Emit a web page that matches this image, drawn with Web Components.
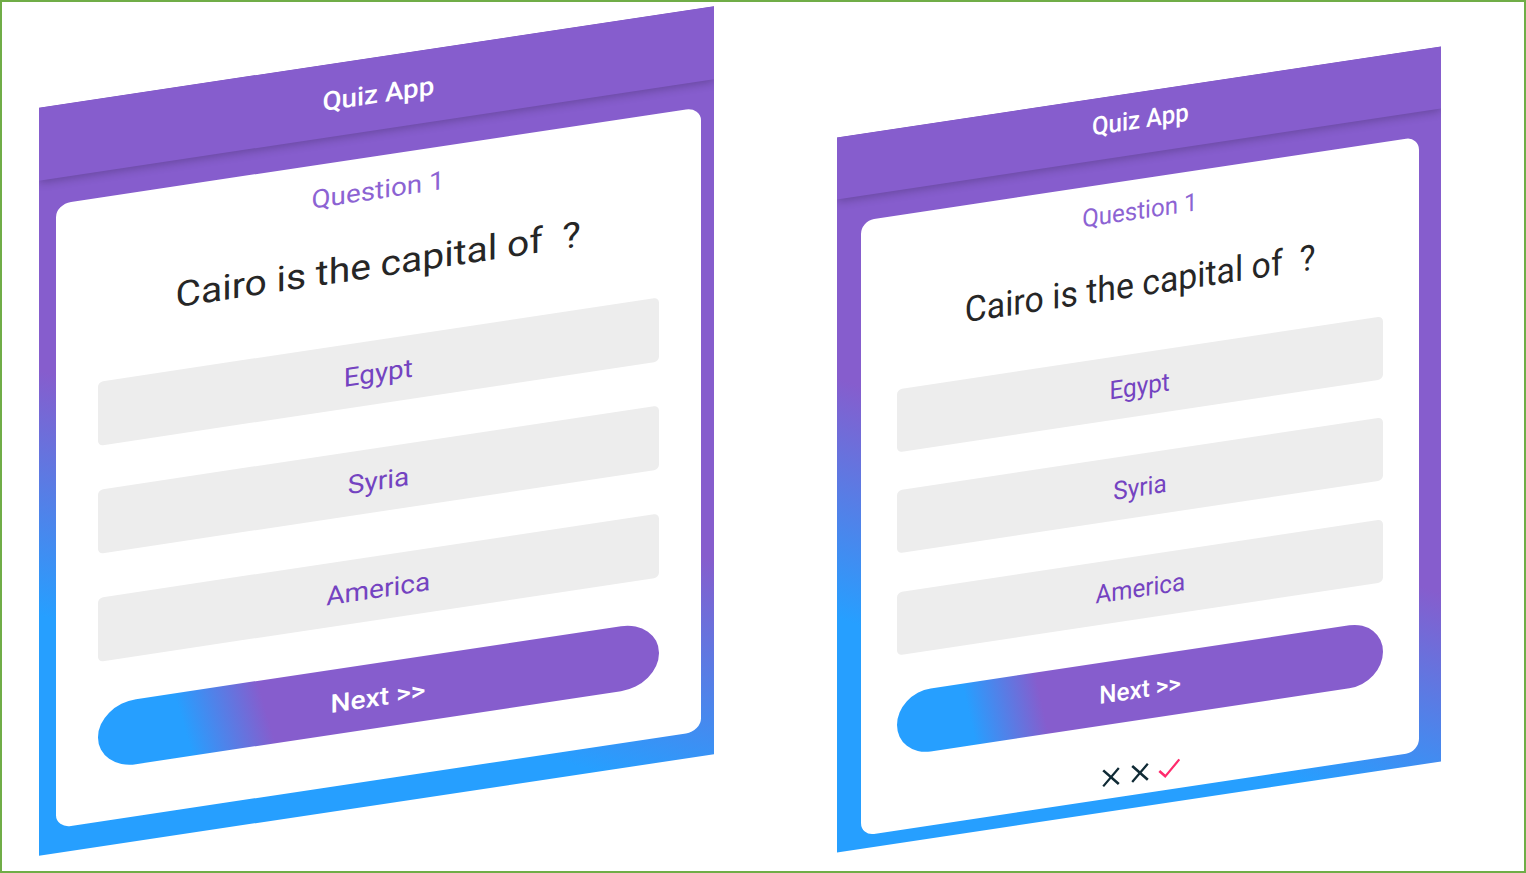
<!DOCTYPE html>
<html lang="en">
<head>
<meta charset="utf-8">
<title>Quiz App</title>
<style>
html,body{margin:0;height:100%;background:#fff}
body{font-family:Roboto,"Liberation Sans",sans-serif}
quiz-phone.a{--w:675px;--h:747.5px;--k:-.1504;--left:37px;--top:55.25px;
 --bg:linear-gradient(23.3deg,#269fff 221px,#865dcd 446px);
 --head:73px;--headpad:2px;--headx:4px;--card-m:25.5px 12.9px 24.7px 16.5px;--card-p:15px 42px 0 42px;--cr:15px/13px;
 --g1:24.5px;--g2:45px;--bh:64px;--pitch:44px;--g3:43.3px;--nh:64.5px;--nr:38px/32.25px;--br:5px;
 --btn:linear-gradient(74.4deg,#269fff 91px,#865dcd 171px)}
quiz-phone.b{--w:604px;--h:714.8px;--k:-.1507;--left:123px;--top:89.5px;
 --bg:linear-gradient(26.9deg,#269fff 209.6px,#865dcd 423.6px);
 --head:62.3px;--headpad:-7.4px;--headx:2px;--card-m:24.6px 21.9px 12.8px 24px;--card-p:12.3px 36.3px 0 36.3px;--cr:13px/13px;
 --g1:23.4px;--g2:38.6px;--bh:63px;--pitch:38.2px;--g3:38px;--nh:63.6px;--nr:34px/31.8px;--br:5px;
 --btn:linear-gradient(78deg,#269fff 77px,#865dcd 148.5px)}
</style>
</head>
<body>
<quiz-stage>
  <quiz-phone class="a">
    <fit-text slot="title" size="26" weight="500" width="112">Quiz App</fit-text>
    <fit-text slot="number" size="25.5" width="133">Question 1</fit-text>
    <fit-text slot="question" size="35.5" width="405">Cairo is the capital of  ?</fit-text>
    <quiz-option><fit-text size="26" width="69.5">Egypt</fit-text></quiz-option>
    <quiz-option><fit-text size="26" width="61.5">Syria</fit-text></quiz-option>
    <quiz-option><fit-text size="26" width="103.5">America</fit-text></quiz-option>
    <quiz-next slot="next"><fit-text size="25.5" weight="500" width="95">Next &gt;&gt;</fit-text></quiz-next>
  </quiz-phone>
  <quiz-phone class="b">
    <fit-text slot="title" size="25.5" weight="500" width="97">Quiz App</fit-text>
    <fit-text slot="number" size="25" width="115.5">Question 1</fit-text>
    <fit-text slot="question" size="35.5" width="350.5">Cairo is the capital of  ?</fit-text>
    <quiz-option><fit-text size="25.5" width="60">Egypt</fit-text></quiz-option>
    <quiz-option><fit-text size="25.5" width="53.5">Syria</fit-text></quiz-option>
    <quiz-option><fit-text size="25.5" width="90">America</fit-text></quiz-option>
    <quiz-next slot="next"><fit-text size="25" weight="500" width="81.5">Next &gt;&gt;</fit-text></quiz-next>
    <quiz-score slot="score"></quiz-score>
  </quiz-phone>
</quiz-stage>
<script>
const define = (name, html, init) => customElements.define(name, class extends HTMLElement {
  constructor() {
    super();
    this.attachShadow({ mode: 'open' }).innerHTML = html;
  }
  connectedCallback() { if (init) init(this); }
});

define('quiz-stage', `<style>
:host{display:flex;align-items:flex-start;box-sizing:border-box;width:1526px;height:873px;border:2px solid #70ad47;background:#fff;overflow:hidden}
</style><slot></slot>`);

// A phone page sheared so that its horizontal edges rise to the right.
define('quiz-phone', `<style>
:host{display:flex;flex:none;flex-direction:column;width:var(--w);height:var(--h);margin:var(--top) 0 0 var(--left);
 transform:matrix(1,var(--k),0,1,0,0);background:var(--bg);overflow:hidden}
header{flex:none;display:flex;align-items:center;justify-content:center;height:var(--head);background:#865dcd;color:#fff;
 box-shadow:0 2px 10px rgba(0,0,0,.24)}
header slot{display:block;transform:translate(calc(var(--headx)/2),calc(var(--headpad)/2))}
main{flex:1;display:flex;flex-direction:column;box-sizing:border-box;margin:var(--card-m);padding:var(--card-p);background:#fff;border-radius:var(--cr)}
.n,.q{display:flex;justify-content:center;align-items:center;height:40px;flex:none;color:#8c63d3}
.q{height:60px;margin-top:var(--g1);color:#262626}
.o{display:flex;flex-direction:column;gap:var(--pitch);margin-top:var(--g2)}
.x{margin-top:var(--g3)}
</style>
<header><slot name="title"></slot></header>
<main><div class="n"><slot name="number"></slot></div><div class="q"><slot name="question"></slot></div>
<div class="o"><slot></slot></div><div class="x"><slot name="next"></slot></div><slot name="score"></slot></main>`);

define('quiz-option', `<style>
:host{display:flex;align-items:center;justify-content:center;box-sizing:border-box;height:var(--bh);padding-top:2.8px;background:#ededed;border-radius:var(--br);color:#7443c1}
</style><slot></slot>`);

define('quiz-next', `<style>
:host{display:flex;align-items:center;justify-content:center;box-sizing:border-box;height:var(--nh);padding-top:2.8px;background:var(--btn);border-radius:var(--nr);color:#fff}
</style><slot></slot>`);

define('quiz-score', `<style>
:host{display:flex;justify-content:center;gap:5px;margin-top:40.6px}
svg{display:block;width:24px;height:24px;fill:none;stroke:#102b36;stroke-width:2.4}
.ok{stroke:#ff2b6d}
</style>
<svg viewBox="-12 -12 24 24"><path d="M-7.8-8 7.8 8M7.8-8-7.8 8"/></svg>
<svg viewBox="-12 -12 24 24"><path d="M-7.8-8 7.8 8M7.8-8-7.8 8"/></svg>
<svg class="ok" viewBox="-12 -12 24 24"><path d="M-9.7 1.1-3.7 7.3 10.3-7.5"/></svg>`);

// One line of text stretched horizontally to the given advance width.
define('fit-text', `<style>
:host{display:block;white-space:pre;line-height:1.2}
span{display:block}
</style><span><slot></slot></span>`, el => {
  el.style.fontSize = el.getAttribute('size') + 'px';
  el.style.fontWeight = el.getAttribute('weight') || 400;
  const span = el.shadowRoot.querySelector('span');
  span.style.transform = `scaleX(${el.getAttribute('width') / span.offsetWidth})`;
});
</script>
</body>
</html>
